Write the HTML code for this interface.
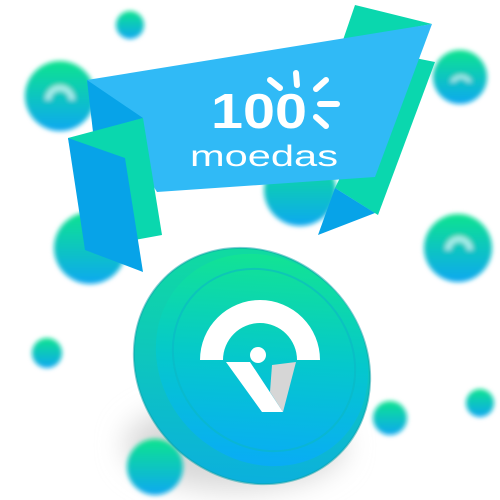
<!DOCTYPE html>
<html><head><meta charset="utf-8"><style>
html,body{margin:0;padding:0;background:#fff;width:500px;height:500px;overflow:hidden}
svg{display:block}
</style></head><body>
<svg width="500" height="500" viewBox="0 0 500 500" xmlns="http://www.w3.org/2000/svg">
<defs>
<linearGradient id="cg" x1="0" y1="0" x2="0" y2="1">
<stop offset="0" stop-color="#0fe38f"/><stop offset="1" stop-color="#0aa8f0"/>
</linearGradient>
<linearGradient id="fg" x1="0" y1="0" x2="0" y2="1" gradientTransform="rotate(-45 .5 .5)">
<stop offset="0" stop-color="#12e394"/><stop offset="0.5" stop-color="#05c8cc"/><stop offset="1" stop-color="#09acf5"/>
</linearGradient>
<linearGradient id="eg" x1="0" y1="0" x2="0" y2="1" gradientTransform="rotate(-45 .5 .5)">
<stop offset="0" stop-color="#10dba0"/><stop offset="1" stop-color="#0bb0dd"/>
</linearGradient>
<filter id="b4" x="-50%" y="-50%" width="200%" height="200%"><feGaussianBlur stdDeviation="2.5"/></filter>
<filter id="b12" x="-50%" y="-50%" width="200%" height="200%"><feGaussianBlur stdDeviation="14"/></filter>
</defs>
<ellipse cx="235" cy="445" rx="110" ry="45" fill="#d8d8d8" filter="url(#b12)"/>
<g filter="url(#b4)">
<circle cx="130" cy="25" r="14" fill="url(#cg)"/>
<circle cx="60" cy="96" r="35" fill="url(#cg)"/>
<circle cx="460" cy="77" r="27" fill="url(#cg)"/>
<circle cx="300" cy="190" r="36" fill="url(#cg)"/>
<circle cx="90" cy="248" r="36" fill="url(#cg)"/>
<circle cx="458" cy="248" r="34" fill="url(#cg)"/>
<circle cx="47" cy="353" r="15" fill="url(#cg)"/>
<circle cx="390" cy="418" r="17" fill="url(#cg)"/>
<circle cx="480" cy="403" r="14" fill="url(#cg)"/>
<circle cx="155" cy="467" r="28" fill="url(#cg)"/>
<path d="M45 100a15 15 0 0 1 30 0h-6a9 9 0 0 0-18 0z M450 82a12 12 0 0 1 22 0h-5a7 7 0 0 0-12 0z M445 250a14 14 0 0 1 28 0h-6a8 8 0 0 0-16 0z" fill="#e8fbff" opacity="0.7"/>
</g>
<polygon points="355,5 432,24 343,40" fill="#0ad7ae"/>
<polygon points="400,55 435,62 378,215 335,188" fill="#0ad7ae"/>
<polygon points="335,188 375,213 318,235" fill="#07a3e8"/>
<polygon points="87,80 432,24 375,177 157,192" fill="#30baf6"/>
<polygon points="87,80 143,118 93,132" fill="#07a3e8"/>
<polygon points="68,138 143,118 162,235 90,248" fill="#0ad7ae"/>
<polygon points="68,138 125,158 143,272 85,250" fill="#07a3e8"/>
<text x="211" y="128" font-family="Liberation Sans, sans-serif" font-weight="bold" font-size="49" fill="#fff" textLength="96" lengthAdjust="spacingAndGlyphs">100</text>
<text x="190" y="166" font-family="Liberation Sans, sans-serif" font-size="30" fill="#fff" textLength="148" lengthAdjust="spacingAndGlyphs">moedas</text>
<g stroke="#fff" stroke-width="6" stroke-linecap="round">
<line x1="296" y1="73" x2="297" y2="85"/>
<line x1="270" y1="80" x2="280" y2="88"/>
<line x1="326" y1="80" x2="316" y2="89"/>
<line x1="320" y1="104" x2="337" y2="104"/>
<line x1="316" y1="117" x2="326" y2="126"/>
</g>
<ellipse cx="252" cy="366" rx="124" ry="112" transform="rotate(45 252 366)" fill="url(#eg)"/>
<ellipse cx="252" cy="366" rx="124" ry="112" transform="rotate(45 252 366)" fill="none" stroke="#0a9fa8" stroke-width="2" opacity="0.5"/>
<ellipse cx="262" cy="360" rx="112" ry="100" transform="rotate(45 262 360)" fill="url(#fg)"/>
<ellipse cx="264" cy="360" rx="96" ry="86" transform="rotate(45 264 360)" fill="none" stroke="#0bb8c4" stroke-width="2" opacity="0.6"/>
<path d="M200 360 A60 60 0 0 1 320 360 L297 360 A37 37 0 0 0 223 360 Z" fill="#fff"/>
<circle cx="258" cy="355" r="8" fill="#fff"/>
<polygon points="226,362 250,362 283,412 262,412" fill="#fff"/>
<polygon points="272,365 296,362 283,412 270,392" fill="#d6d6d6"/>
</svg>
</body></html>
